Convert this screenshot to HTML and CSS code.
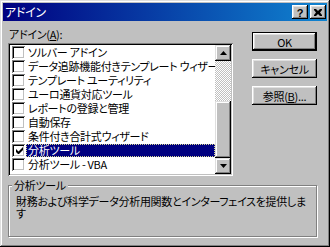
FILE: index.html
```html
<!DOCTYPE html>
<html lang="ja">
<head>
<meta charset="utf-8">
<title>アドイン</title>
<link rel="stylesheet" href="styles.css">
</head>
<body>
<div class="window">
  <div class="titlebar">
    <span class="title">アドイン</span>
    <div class="tbtns">
      <span class="tbtn help">?</span>
      <span class="tbtn close"><svg width="8" height="7" viewBox="0 0 8 7"><path d="M0 0h2l2 2 2-2h2v1L6 3.5 8 6v1H6L4 5 2 7H0V6l2-2.5L0 1z" fill="#000"/></svg></span>
    </div>
  </div>
  <div class="content">
    <div class="left">
      <div class="label">アドイン(<u>A</u>):</div>
      <div class="listbox">
        <ul class="items">
          <li class="row"><span class="cb"></span><span class="txt">ソルバー アドイン</span></li>
          <li class="row"><span class="cb"></span><span class="txt">データ追跡機能付きテンプレート ウィザード</span></li>
          <li class="row"><span class="cb"></span><span class="txt">テンプレート ユーティリティ</span></li>
          <li class="row"><span class="cb"></span><span class="txt">ユーロ通貨対応ツール</span></li>
          <li class="row"><span class="cb"></span><span class="txt">レポートの登録と管理</span></li>
          <li class="row"><span class="cb"></span><span class="txt">自動保存</span></li>
          <li class="row"><span class="cb"></span><span class="txt">条件付き合計式ウィザード</span></li>
          <li class="row selected"><span class="cb checked"><svg width="7" height="7" viewBox="0 0 7 7"><path d="M0 2v3l2 2h1l4-4V0L2.5 4.5z" fill="#000"/></svg></span><span class="txt">分析ツール</span></li>
          <li class="row"><span class="cb"></span><span class="txt">分析ツール - VBA</span></li>
        </ul>
        <div class="scrollbar">
          <span class="sbtn"><svg width="7" height="4" viewBox="0 0 7 4"><path d="M3.5 0L7 4H0z" fill="#000"/></svg></span>
          <span class="track"></span>
          <span class="thumb"></span>
          <span class="sbtn"><svg width="7" height="4" viewBox="0 0 7 4"><path d="M0 0h7L3.5 4z" fill="#000"/></svg></span>
        </div>
      </div>
    </div>
    <div class="buttons">
      <span class="btn default">OK</span>
      <span class="btn">キャンセル</span>
      <span class="btn">参照(<u>B</u>)...</span>
    </div>
  </div>
  <div class="group">
    <span class="legend">分析ツール</span>
    <div class="desc">
      <span class="line">財務および科学データ分析用関数とインターフェイスを提供しま</span>
      <span class="line">す</span>
    </div>
  </div>
</div>
</body>
</html>
```
FILE: styles.css
```css
* { box-sizing: border-box; }
html, body { margin: 0; padding: 0; background: #c0c0c0; }
body {
  font-family: "Noto Sans CJK JP", "Noto Sans", sans-serif;
  font-size: 11px;
  font-feature-settings: "palt";
  letter-spacing: -0.3px;
  color: #000;
}
.window {
  width: 330px;
  height: 247px;
  padding: 3px;
  background: #c0c0c0;
  box-shadow: inset -1px -1px #000, inset 1px 1px #dfdfdf, inset -2px -2px #808080, inset 2px 2px #fff;
  overflow: hidden;
}
.titlebar {
  height: 18px;
  display: flex;
  align-items: center;
  justify-content: space-between;
  padding-left: 2px;
  background: linear-gradient(to right, #000080, #1084d0);
  color: #fff;
}
.title { line-height: 18px; font-size: 12px; }
.tbtns { display: flex; gap: 2px; margin-right: 1px; }
.tbtn {
  width: 16px;
  height: 14px;
  display: flex;
  align-items: center;
  justify-content: center;
  background: #c0c0c0;
  color: #000;
  font-family: "Liberation Sans", sans-serif;
  font-weight: bold;
  font-size: 11px;
  letter-spacing: 0;
  box-shadow: inset -1px -1px #000, inset 1px 1px #fff, inset -2px -2px #808080, inset 2px 2px #dfdfdf;
}
.tbtn.help { padding-top: 1px; }
.content {
  display: grid;
  grid-template-columns: 225px 65px;
  column-gap: 19px;
  padding: 4px 0 0 5px;
}
.label { height: 18px; line-height: 18px; padding-left: 1px; }
.listbox {
  height: 133px;
  display: flex;
  padding: 2px;
  background: #fff;
  box-shadow: inset 1px 1px #808080, inset -1px -1px #fff, inset 2px 2px #000, inset -2px -2px #c0c0c0;
}
.items {
  list-style: none;
  margin: 0;
  padding: 0;
  flex: 1;
  overflow: hidden;
  min-width: 0;
}
.row {
  height: 14px;
  display: flex;
  align-items: center;
  padding-left: 2px;
  white-space: nowrap;
}
.cb {
  flex: none;
  width: 13px;
  height: 13px;
  background: #fff;
  display: flex;
  align-items: center;
  justify-content: center;
  box-shadow: inset 1px 1px #808080, inset -1px -1px #fff, inset 2px 2px #000, inset -2px -2px #c0c0c0;
}
.cb svg { margin: 1px 0 0 1px; }
.txt {
  flex: 1;
  height: 13px;
  line-height: 13px;
  margin-left: 1px;
  padding-left: 2px;
  overflow: hidden;
}
.selected .txt {
  background: #000080;
  color: #fff;
  outline: 1px dotted #d8d890;
  outline-offset: -1px;
}
.scrollbar {
  width: 16px;
  flex: none;
  display: flex;
  flex-direction: column;
}
.sbtn {
  height: 16px;
  flex: none;
  display: flex;
  align-items: center;
  justify-content: center;
  background: #c0c0c0;
  box-shadow: inset -1px -1px #000, inset 1px 1px #dfdfdf, inset -2px -2px #808080, inset 2px 2px #fff;
}
.track {
  height: 40px;
  flex: none;
  background: repeating-conic-gradient(#c0c0c0 0 25%, #fff 0 50%) 0 0 / 2px 2px;
}
.thumb {
  flex: 1;
  background: #c0c0c0;
  box-shadow: inset -1px -1px #000, inset 1px 1px #dfdfdf, inset -2px -2px #808080, inset 2px 2px #fff;
}
.buttons {
  display: flex;
  flex-direction: column;
  gap: 8px;
  padding-top: 7px;
}
.btn {
  height: 19px;
  display: flex;
  align-items: center;
  justify-content: center;
  background: #c0c0c0;
  box-shadow: inset -1px -1px #000, inset 1px 1px #fff, inset -2px -2px #808080, inset 2px 2px #dfdfdf;
}
.btn.default {
  box-shadow: inset 0 0 0 1px #000, inset -2px -2px #000, inset 2px 2px #fff, inset -3px -3px #808080, inset 3px 3px #dfdfdf;
}
.group {
  position: relative;
  margin: 9px 0 0 5px;
  width: 309px;
  height: 52px;
  border: 1px solid #808080;
  box-shadow: inset 1px 1px #fff, 1px 1px #fff;
}
.legend {
  position: absolute;
  left: 3px;
  top: -7px;
  padding: 0 2px;
  line-height: 12px;
  background: #c0c0c0;
}
.desc {
  display: flex;
  flex-direction: column;
  padding: 9px 0 0 7px;
}
.line {
  display: block;
  height: 12px;
  line-height: 13px;
  white-space: nowrap;
}
```
